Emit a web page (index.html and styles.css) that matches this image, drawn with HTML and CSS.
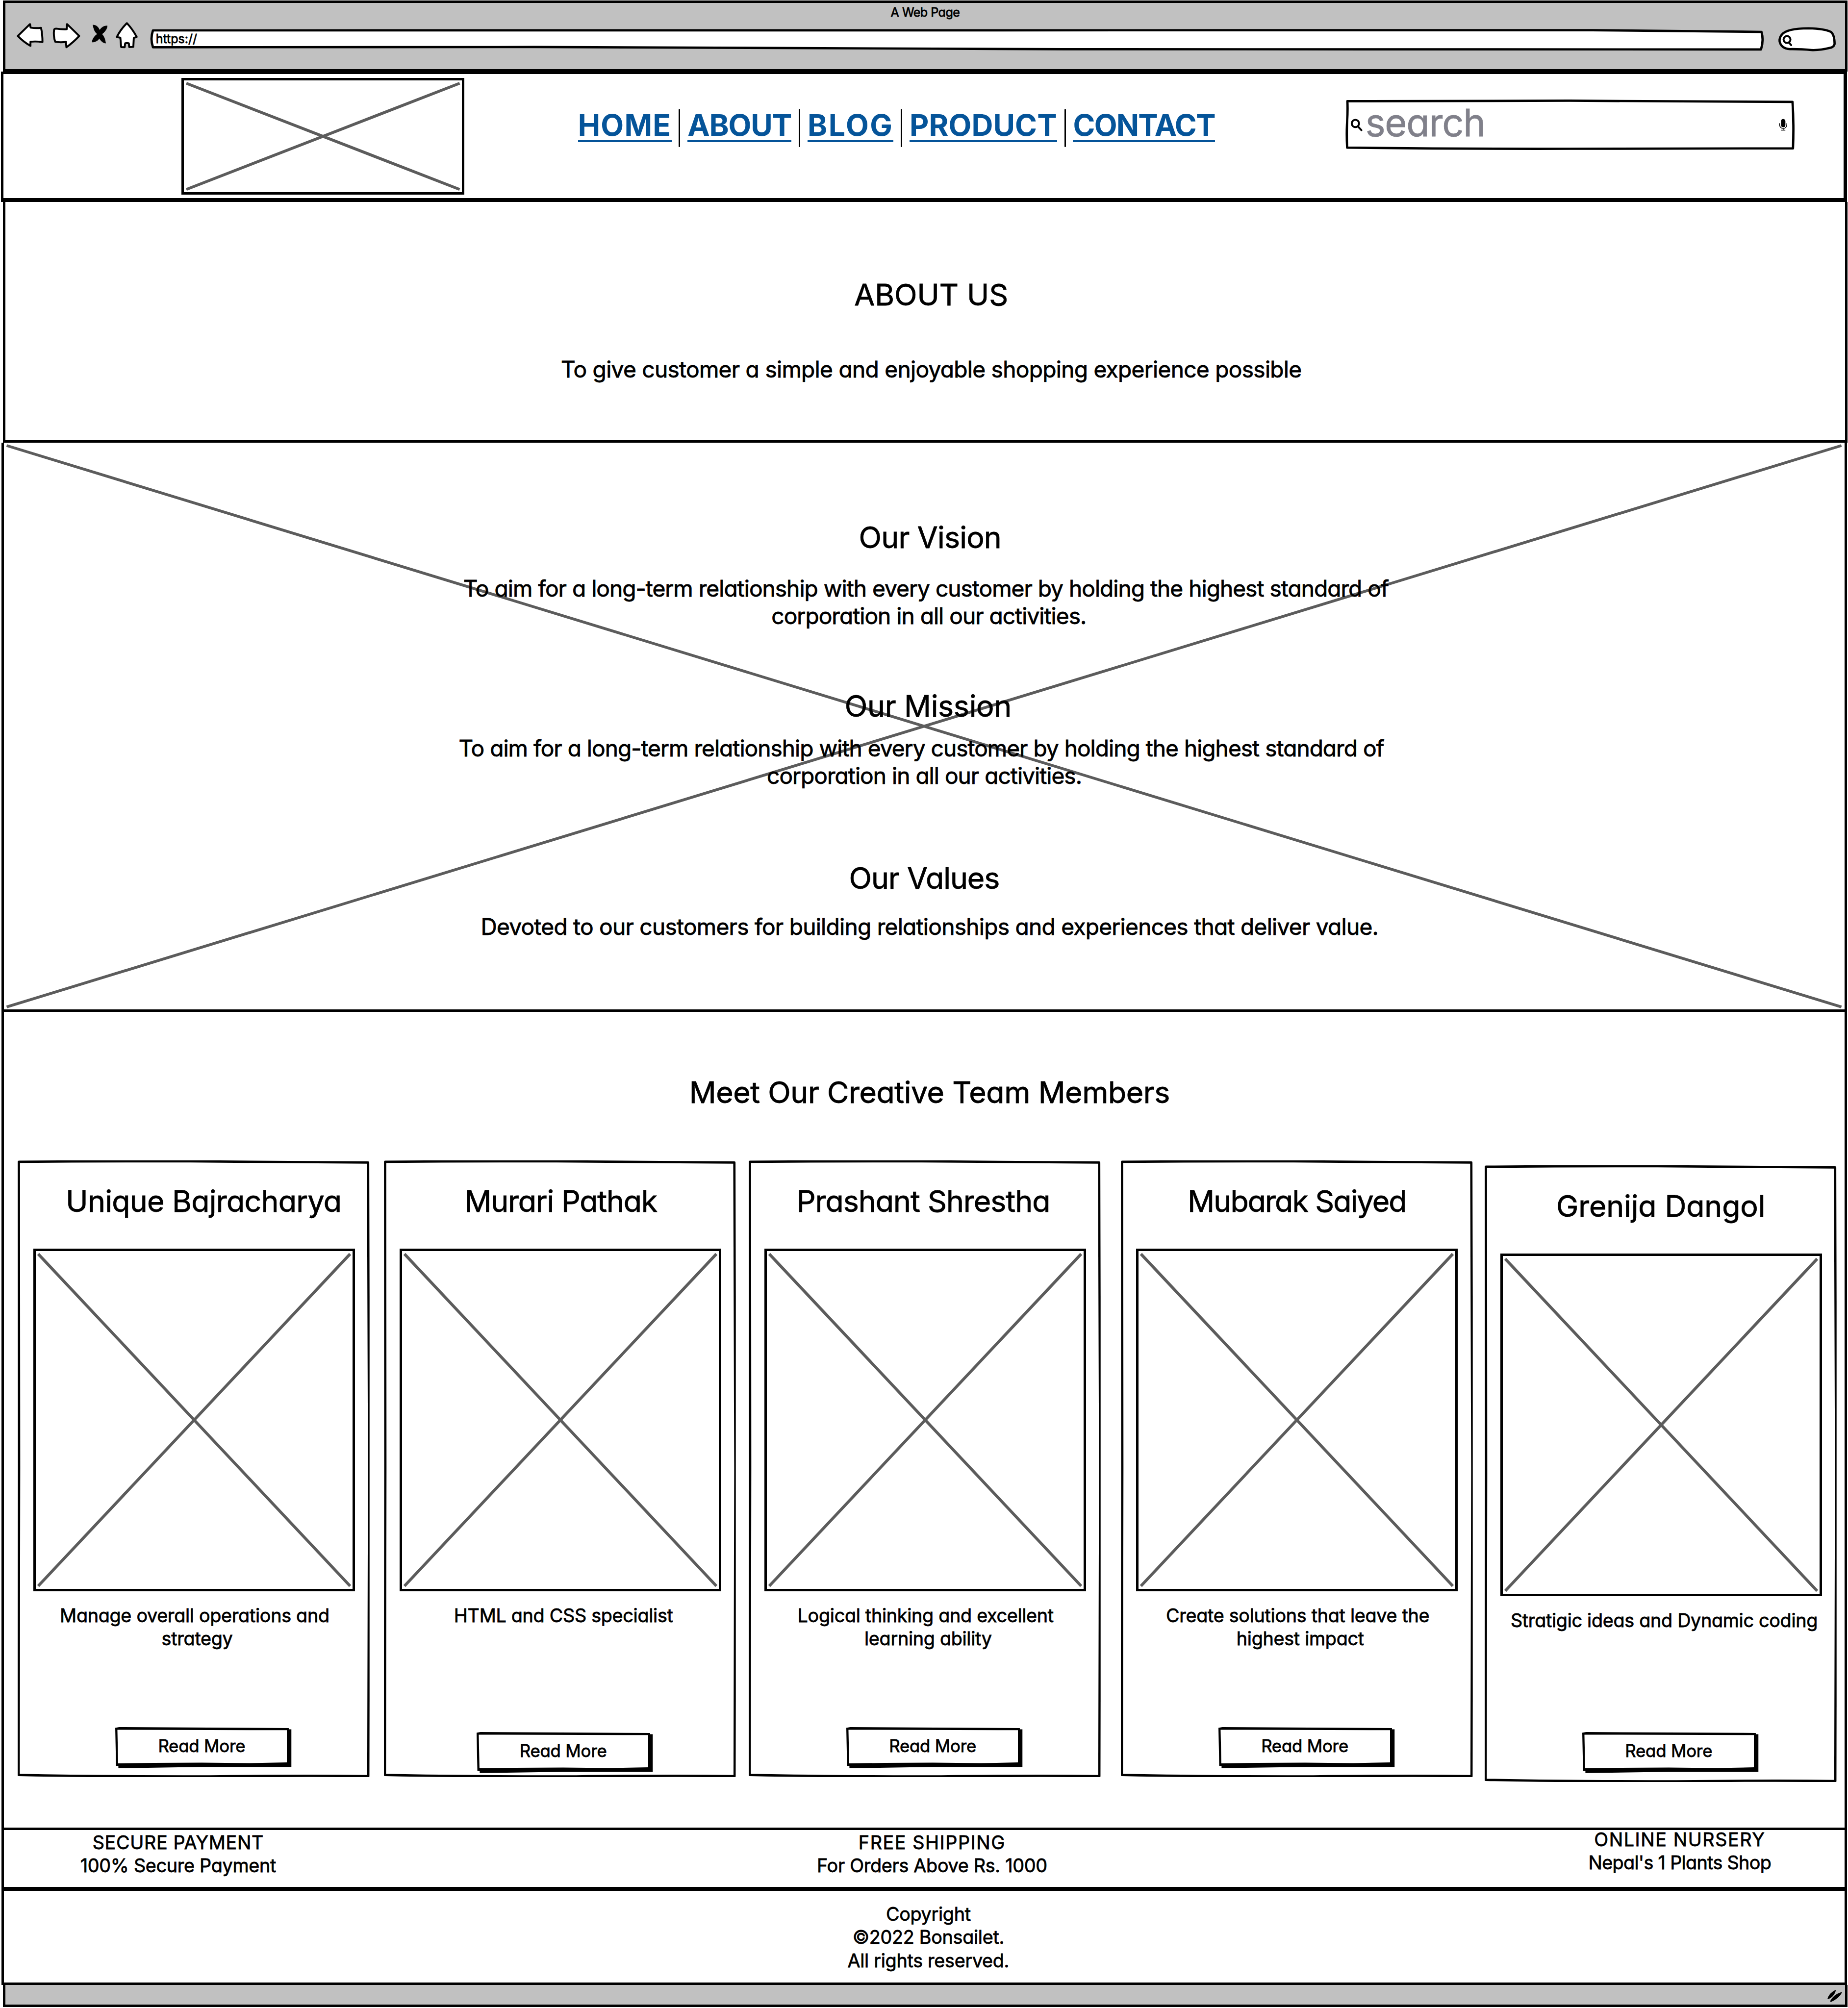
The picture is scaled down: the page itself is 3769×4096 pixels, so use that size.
FILE: index.html
```
<!DOCTYPE html>
<html lang="en">
<head>
<meta charset="utf-8">
<title>A Web Page</title>
<link rel="stylesheet" href="styles.css">
</head>
<body>
<svg class="defs" aria-hidden="true">
  <symbol id="card-frame" viewBox="0 0 732 1283" preserveAspectRatio="none">
    <path d="M2.5 3 Q180 1.5 360 2 T729 4.5 Q730.5 400 731 640 Q731 1000 729.5 1281 Q600 1279.500 400 1281.500 Q180 1282 2 1278.500 Q2 900 3 640 T2.500 3Z"/>
  </symbol>
  <symbol id="photo-cross" viewBox="0 0 659 703" preserveAspectRatio="none">
    <path d="M5 6L654 697M654 6L5 697"/>
  </symbol>
  <symbol id="button-frame" viewBox="0 0 367 86">
    <path fill="#000" d="M0 1.500L8 0L361 2V4.500H366.500V83L180 83L6.500 85.500V80.500H1.600Z"/>
    <path fill="#fff" d="M4.500 5.500L357 6.500V73.500L280 75L180 74L80 74.500L6 75.500Z"/>
  </symbol>
</svg>

<div class="browser-bar">
  <div class="window-title">A Web Page</div>
  <div class="toolbar">
    <svg class="icon-back" viewBox="45 27 170 192"><path d="M52 120L128 46L132 68Q165 73 197 69Q206 110 206 158Q165 152 131 156L131 182Q85 155 52 120Z"/></svg>
    <svg class="icon-forward" viewBox="264 27 180 192"><path d="M290 74Q325 80 356 78L358 46Q395 82 434 120Q395 162 354 190L351 157Q315 162 284 156Q272 120 277 82Q279 74 290 74Z"/></svg>
    <svg class="icon-stop" viewBox="510 27 105 192"><path d="M522 52Q548 50 563 84Q580 56 610 57Q608 85 577 108Q596 130 600 165Q580 164 561 136Q540 160 516 158Q518 130 548 108Q526 90 522 52Z"/></svg>
    <svg class="icon-home" viewBox="660 27 144 192"><path d="M733 40Q770 80 794 126L776 132L773 188L747 189L745 166Q733 162 722 166L719 190L697 189L692 131L670 126Q695 76 733 40Z"/></svg>
    <div class="address">
      <svg class="frame" viewBox="0 0 3357 64"><path d="M6 19.400L3000 19Q3200 21 3352 22.500Q3357 40 3351 59L1900 58.500Q1500 57 800 54L6 54.400Q0 37 6 19.400Z"/></svg>
      <span class="address-text">https://</span>
    </div>
    <svg class="pill" viewBox="48 12 372 192"><path class="pill-body" d="M80 95Q110 58 245 57Q350 60 386 80Q408 100 408 155Q404 174 380 179Q320 194 270 193Q190 186 130 187Q75 184 65 140Q62 115 80 95Z"/><circle cx="111" cy="127" r="21.500"/><path d="M122 145L137 162"/></svg>
  </div>
</div>

<header class="header">
  <div class="logo"><svg viewBox="0 0 579 233"><path d="M5 6L574 227M574 6L5 227"/></svg></div>
  <nav class="nav">
    <a class="home">HOME</a><i></i><a class="about-link">ABOUT</a><i></i><a class="blog">BLOG</a><i></i><a class="product">PRODUCT</a><i></i><a class="contact">CONTACT</a>
  </nav>
  <div class="search">
    <svg class="frame" viewBox="0 0 932 103"><path d="M3 2.500Q220 1 465 1.500T929 4Q932 50 930 100.500Q700 101 465 101.500T2.500 99Q1 70 2.500 45T3 2.500Z"/></svg>
    <svg class="icon-search" viewBox="0 0 26 26"><circle cx="10.500" cy="10" r="7.600"/><path d="M15.500 16L23 24"/></svg>
    <span class="placeholder">search</span>
    <svg class="icon-mic" viewBox="64 622 53 76"><rect x="77" y="624" width="27" height="50" rx="13"/><path d="M68.500 652V660A22 22 0 0 0 112.500 660V652M90.500 682V692M79 692.500H102"/></svg>
  </div>
</header>

<section class="about">
  <h1>ABOUT US</h1>
  <p class="tagline">To give customer a simple and enjoyable shopping experience possible</p>
</section>

<section class="vision">
  <svg class="backdrop" viewBox="0 0 3829 1180"><path d="M4 6L3824 1175M3824 6L4 1175"/></svg>
  <div class="goals">
    <h2 class="vision-title">Our Vision</h2>
    <p class="vision-text">To aim for a long-term relationship with every customer by holding the highest standard of&nbsp;<br>corporation in all our activities.</p>
    <h2 class="mission-title">Our Mission</h2>
    <p class="mission-text">To aim for a long-term relationship with every customer by holding the highest standard of&nbsp;<br>corporation in all our activities.</p>
    <h2 class="values-title">Our Values</h2>
    <p class="values-text">Devoted to our customers for building relationships and experiences that deliver value.</p>
  </div>
</section>

<section class="team">
  <h2 class="team-title">Meet Our Creative Team Members</h2>
  <div class="cards">
    <article class="card">
      <svg class="frame"><use href="#card-frame"/></svg>
      <h3 class="name unique">Unique Bajracharya</h3>
      <div class="photo"><svg><use href="#photo-cross"/></svg></div>
      <p class="role">Manage overall operations and&nbsp;<br>strategy</p>
      <button class="more"><svg class="frame"><use href="#button-frame"/></svg><span>Read More</span></button>
    </article>
    <article class="card">
      <svg class="frame"><use href="#card-frame"/></svg>
      <h3 class="name murari">Murari Pathak</h3>
      <div class="photo"><svg><use href="#photo-cross"/></svg></div>
      <p class="role">HTML and CSS specialist</p>
      <button class="more shifted"><svg class="frame"><use href="#button-frame"/></svg><span>Read More</span></button>
    </article>
    <article class="card">
      <svg class="frame"><use href="#card-frame"/></svg>
      <h3 class="name prashant">Prashant Shrestha</h3>
      <div class="photo"><svg><use href="#photo-cross"/></svg></div>
      <p class="role">Logical thinking and excellent&nbsp;<br>learning ability</p>
      <button class="more"><svg class="frame"><use href="#button-frame"/></svg><span>Read More</span></button>
    </article>
    <article class="card">
      <svg class="frame"><use href="#card-frame"/></svg>
      <h3 class="name mubarak">Mubarak Saiyed</h3>
      <div class="photo"><svg><use href="#photo-cross"/></svg></div>
      <p class="role">Create solutions that leave the&nbsp;<br>highest impact</p>
      <button class="more"><svg class="frame"><use href="#button-frame"/></svg><span>Read More</span></button>
    </article>
    <article class="card lowered">
      <svg class="frame"><use href="#card-frame"/></svg>
      <h3 class="name grenija">Grenija Dangol</h3>
      <div class="photo"><svg><use href="#photo-cross"/></svg></div>
      <p class="role">Stratigic ideas and Dynamic coding</p>
      <button class="more"><svg class="frame"><use href="#button-frame"/></svg><span>Read More</span></button>
    </article>
  </div>
</section>

<section class="perks">
  <div class="perk"><span class="secure">SECURE PAYMENT</span><br>100% Secure Payment</div>
  <div class="perk shipping"><span class="free">FREE SHIPPING</span><br>For Orders Above Rs. 1000</div>
  <div class="perk nursery"><span class="online">ONLINE NURSERY</span><br>Nepal's 1 Plants Shop</div>
</section>

<footer class="copyright">Copyright<br>©2022 Bonsailet.<br>All rights reserved.</footer>

<div class="status-bar">
  <svg class="grip" viewBox="0 0 60 46"><path d="M4 33Q12 12 33 2Q28 24 6 34ZM14 44Q28 18 57 10Q46 32 16 45Z"/></svg>
</div>
</body>
</html>
```
FILE: styles.css
```
html { font-size: 98.05px; }
* { box-sizing: border-box; }
body {
  margin: 0;
  width: 38.44rem;
  height: 41.77rem;
  overflow: hidden;
  background: #fff;
  color: #000;
  font-family: Inter, "Open Sans", sans-serif;
  font-feature-settings: "cv11";
  -webkit-text-stroke: .008rem currentColor;
}
h1, h2, h3, p { margin: 0; font-weight: 400; text-align: center; }
h1, h2, h3 { font-size: .62rem; line-height: .7rem; }
p { font-size: .47rem; line-height: .57rem; white-space: nowrap; }
svg { display: block; fill: none; stroke: #000; stroke-linejoin: round; stroke-linecap: round; }
.defs { position: absolute; width: 0; height: 0; }
.frame { position: absolute; left: 0; top: 0; width: 100%; height: 100%; stroke-width: 4.8; overflow: visible; }

/* browser chrome */
.browser-bar {
  height: 1.48rem;
  margin: .01rem .01rem 0 .06rem;
  border: 5px solid #000;
  background: #c1c1c1;
}
.window-title {
  padding-top: .055rem;
  font-size: .255rem;
  line-height: .3rem;
  text-align: center;
  letter-spacing: -.005rem;
}
.toolbar { display: flex; margin-top: .025rem; padding-left: .24rem; }
.toolbar svg { height: .64rem; fill: #fff; stroke-width: 12; flex: none; }
.toolbar .icon-back { width: .567rem; margin-right: .163rem; }
.toolbar .icon-forward { width: .6rem; margin-right: .22rem; }
.toolbar .icon-stop { width: .35rem; margin-right: .15rem; fill: #000; stroke-width: 3; }
.toolbar .icon-home { width: .48rem; margin-right: .24rem; }
.toolbar .pill { width: 1.24rem; stroke-width: 12; }
.toolbar .pill-body { stroke-width: 14; }
.address { position: relative; width: 33.57rem; height: .64rem; margin-right: .27rem; }
.toolbar .address .frame { stroke-width: 4.8; }
.address-text { position: relative; display: block; padding: .22rem 0 0 .12rem; font-size: .255rem; line-height: .3rem; }

/* site header */
.header {
  display: flex;
  align-items: flex-start;
  height: 2.71rem;
  margin: 0 .02rem 0 .02rem;
  border: solid #000;
  border-width: 5px 7px 8px 5px;
}
.logo { width: 5.89rem; height: 2.43rem; margin: .08rem 0 0 3.7rem; border: 5px solid #000; }
.logo svg, .photo svg { width: 100%; height: 100%; stroke: #5c5c5c; stroke-width: 6; stroke-linecap: butt; }
.nav { display: flex; justify-content: space-between; width: 13.25rem; margin: .72rem 0 0 2.36rem; }
.nav i { width: .03rem; height: .8rem; border-radius: .02rem; background: #000; }
.nav a {
  height: .67rem;
  margin-top: .03rem;
  border-bottom: 4px solid #055499;
  color: #055499;
  font-size: .62rem;
  font-weight: 700;
  line-height: .63rem;
  -webkit-text-stroke: 0;
}
.home { letter-spacing: .013rem; }
.about-link { letter-spacing: -.011rem; }
.blog { letter-spacing: .026rem; }
.product { letter-spacing: .001rem; }
.contact { letter-spacing: -.018rem; }
.search { position: relative; display: flex; width: 9.32rem; height: 1.03rem; margin: .54rem 0 0 2.73rem; padding: 0 .14rem 0 .09rem; }
.icon-search { width: .26rem; height: .26rem; margin-top: .39rem; stroke-width: 4; }
.placeholder { flex: 1; padding: .02rem 0 0 .05rem; color: #80808a; font-size: .79rem; line-height: .9rem; letter-spacing: -.012rem; }
.icon-mic { width: .18rem; height: .26rem; margin-top: .39rem; fill: none; stroke-width: 4.5; }
.icon-mic rect { fill: #000; stroke: none; }

/* introduction */
.about {
  height: 5.01rem;
  margin: 0 .01rem 0 .06rem;
  padding: 1.58rem 0 0 .25rem;
  border: solid #000;
  border-width: 0 5px 5px;
}
.tagline { margin-top: .92rem; letter-spacing: -.0072rem; }

/* vision, mission, values */
.vision, .team, .perks, .copyright {
  position: relative;
  margin: 0 .02rem 0 .03rem;
  border: solid #000;
  border-width: 0 5px 5px;
}
.vision { height: 11.84rem; }
.backdrop { position: absolute; left: 0; top: 0; width: 100%; height: 100%; stroke: #5c5c5c; stroke-width: 5.8; stroke-linecap: butt; }
.goals { position: relative; padding-top: 1.625rem; }
.vision-title { padding-left: .24rem; letter-spacing: -.008rem; }
.vision-text { margin-top: .425rem; padding-left: .19rem; letter-spacing: -.01rem; }
.mission-title { margin-top: 1.24rem; padding-left: .16rem; letter-spacing: -.003rem; }
.mission-text { margin-top: .245rem; letter-spacing: -.01rem; }
.values-title { margin-top: 1.5rem; letter-spacing: -.01rem; }
.values-text { margin-top: .375rem; padding-left: .22rem; letter-spacing: -.0075rem; }

/* team */
.team { height: 17.02rem; padding-top: 1.33rem; }
.team-title { padding-left: .22rem; letter-spacing: -.0043rem; }
.cards { display: flex; align-items: flex-start; margin: 1.06rem 0 0 .29rem; }
.card { position: relative; flex: none; width: 7.32rem; height: 12.83rem; padding-top: .5rem; margin-right: .3rem; }
.card:nth-child(2) { margin-right: .265rem; }
.card:nth-child(3) { margin-right: .42rem; }
.card:nth-child(4) { margin-right: .25rem; }
.card.lowered { margin-top: .1rem; margin-right: 0; }
.name { position: relative; }
.unique { padding-left: .41rem; letter-spacing: -.007rem; }
.murari { padding-left: .03rem; letter-spacing: -.012rem; }
.prashant { padding-right: .06rem; letter-spacing: -.01rem; }
.mubarak { letter-spacing: -.019rem; }
.grenija { letter-spacing: -.001rem; }
.photo { position: relative; width: 6.69rem; height: 7.13rem; margin: .64rem 0 0 .32rem; border: 5px solid #000; }
.role { position: relative; height: .96rem; margin-top: .26rem; padding-left: .14rem; font-size: .385rem; line-height: .48rem; letter-spacing: -.003rem; }
.more {
  position: relative;
  display: block;
  width: 3.67rem;
  height: .86rem;
  margin: 1.6rem 0 0 2.025rem;
  padding: 0 .07rem .065rem 0;
  border: 0;
  background: none;
  color: #000;
  font: .355rem/.6rem Inter, "Open Sans", sans-serif;
  font-feature-settings: inherit;
  letter-spacing: -.002rem;
}
.more .frame { stroke: none; }
.more span { position: relative; }
.more.shifted { margin: 1.7rem 0 0 1.925rem; }

/* footer */
.perks, .copyright { font-size: .385rem; line-height: .48rem; text-align: center; }
.perks { display: flex; justify-content: space-between; height: 1.27rem; padding: .02rem .93rem 0 1.125rem; border-bottom-width: 8px; letter-spacing: -.003rem; }
.perk { width: 5rem; white-space: nowrap; }
.shipping { margin-left: .13rem; }
.nursery { margin-top: -.06rem; letter-spacing: -.007rem; }
.secure { letter-spacing: .007rem; }
.free { letter-spacing: .016rem; }
.online { letter-spacing: .016rem; }
.copyright { height: 1.96rem; padding: .247rem 0 0 .17rem; letter-spacing: -.003rem; }
.status-bar {
  display: flex;
  justify-content: flex-end;
  height: .45rem;
  margin: 0 .01rem 0 .06rem;
  padding: .09rem .06rem 0 0;
  border: solid #000;
  border-width: 0 5px 5px;
  background: #c1c1c1;
}
.grip { width: .32rem; height: .27rem; fill: #000; stroke-width: 3; }
```
